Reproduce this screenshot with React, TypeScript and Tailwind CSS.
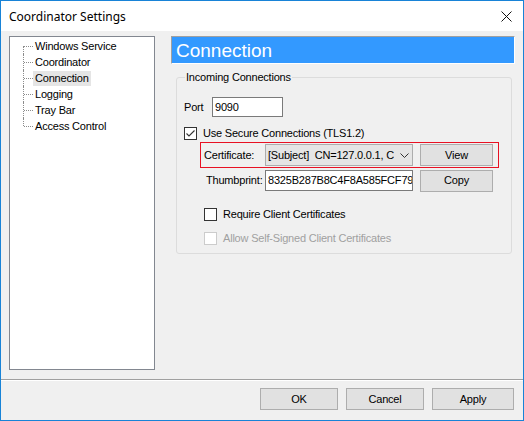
import { ReactNode } from "react";

const font = { fontFamily: '"Liberation Sans", Arial, sans-serif' };

function CheckBox({ checked = false, disabled = false }: { checked?: boolean; disabled?: boolean }) {
    return (
        <span
            className={`flex h-[13px] w-[13px] shrink-0 items-center justify-center border bg-white ${
                disabled ? "border-[#cccccc]" : "border-[#333333]"
            }`}
        >
            {checked && (
                <svg width="11" height="11" viewBox="0 0 11 11">
                    <path d="M1.5 5.5 L4 8 L9.5 2.5" fill="none" stroke="#333" strokeWidth="1.1" />
                </svg>
            )}
        </span>
    );
}

function Button({ children, className = "" }: { children: ReactNode; className?: string }) {
    return (
        <div
            className={`flex h-[22px] shrink-0 items-center justify-center border border-[#adadad] bg-[#e1e1e1] text-[11px] text-black ${className}`}
        >
            {children}
        </div>
    );
}

const treeItems = ["Windows Service", "Coordinator", "Connection", "Logging", "Tray Bar", "Access Control"];

export default function App() {
    return (
        <div
            className="flex h-[421px] w-[524px] flex-col border border-[#1883d7] bg-[#f0f0f0] text-[11px] leading-[13px] tracking-[-0.2px] text-black"
            style={font}
        >
            {/* Title bar */}
            <div className="flex h-[30px] shrink-0 items-center justify-between bg-white pl-[8px] pr-[10px] tracking-normal">
                <span className="text-[12px]" style={{ fontFamily: '"Noto Sans", "Open Sans", sans-serif' }}>
                    Coordinator Settings
                </span>
                <svg width="11" height="11" viewBox="0 0 11 11" className="mr-[1px]">
                    <path d="M0.5 0.5 L10.5 10.5 M10.5 0.5 L0.5 10.5" stroke="#111" strokeWidth="1" />
                </svg>
            </div>

            {/* Main area */}
            <div className="flex h-[348px] shrink-0 gap-[16px] pl-[8px] pr-[8px] pt-[5px]">
                {/* Tree */}
                <div className="h-[334px] w-[146px] shrink-0 border border-[#828790] bg-white pl-[13px] pt-[1px]">
                    {treeItems.map((item, i) => (
                        <div key={item} className="flex h-[16px] items-center">
                            <div className="relative h-full w-[10px] shrink-0">
                                <span
                                    className={`absolute left-0 border-l border-dotted border-[#8c8c8c] ${
                                        i === 0 ? "top-[8px] bottom-0" : i === treeItems.length - 1 ? "top-0 h-[8px]" : "top-0 bottom-0"
                                    }`}
                                />
                                <span className="absolute left-[1px] right-0 top-[8px] border-t border-dotted border-[#8c8c8c]" />
                            </div>
                            <span
                                className={`flex h-[15px] items-center px-[2px] leading-none ${
                                    item === "Connection" ? "bg-[#e5e5e5]" : ""
                                }`}
                            >
                                {item}
                            </span>
                        </div>
                    ))}
                </div>

                {/* Panel */}
                <div className="flex flex-1 flex-col">
                    <div className="flex h-[28px] items-center border-b border-l border-r border-t border-b-white border-l-[#a0a0a0] border-r-white border-t-[#a0a0a0] bg-[#3399ff] pl-[4px] text-[19px] tracking-normal text-white">
                        Connection
                    </div>

                    <fieldset className="ml-[5px] mr-[3px] mt-[7px] h-[183px] rounded-[3px] border border-[#dcdcdc] px-[7px]">
                        <legend className="ml-[1px] px-[1px] leading-[13px]">Incoming Connections</legend>

                        <div className="mt-[13px] flex items-center">
                            <span className="w-[28px]">Port</span>
                            <div className="flex h-[20px] w-[71px] items-center border border-[#7a7a7a] bg-white pl-[2px]">
                                9090
                            </div>
                        </div>

                        <div className="mt-[10px] flex items-center gap-[6px]">
                            <CheckBox checked />
                            <span>Use Secure Connections (TLS1.2)</span>
                        </div>

                        <div className="ml-[16px] mt-[2px] flex h-[26px] w-[299px] items-center border border-[#e81123] pl-[3px]">
                            <span className="w-[61px] shrink-0">Certificate:</span>
                            <div className="flex h-[22px] w-[148px] shrink-0 items-center border border-[#adadad] bg-[#e5e5e5] pl-[2px]">
                                <span className="w-[126px] overflow-hidden whitespace-nowrap">[Subject]&nbsp; CN=127.0.0.1, C</span>
                                <svg width="9" height="5" viewBox="0 0 9 5" className="ml-[6px]">
                                    <path d="M0.5 0.5 L4.5 4.5 L8.5 0.5" fill="none" stroke="#333" strokeWidth="1" />
                                </svg>
                            </div>
                            <Button className="ml-[7px] w-[73px]">View</Button>
                        </div>

                        <div className="ml-[22px] mt-[2px] flex h-[21px] items-center">
                            <span className="w-[59px] shrink-0 whitespace-nowrap">Thumbprint:</span>
                            <div className="flex h-[21px] w-[148px] shrink-0 items-center overflow-hidden whitespace-nowrap border border-[#7a7a7a] bg-white pl-[2px]">
                                8325B287B8C4F8A585FCF79C
                            </div>
                            <Button className="ml-[7px] w-[73px]">Copy</Button>
                        </div>

                        <div className="ml-[20px] mt-[17px] flex items-center gap-[6px]">
                            <CheckBox />
                            <span>Require Client Certificates</span>
                        </div>

                        <div className="ml-[20px] mt-[11px] flex items-center gap-[6px] text-[#a0a0a0]">
                            <CheckBox disabled />
                            <span>Allow Self-Signed Client Certificates</span>
                        </div>
                    </fieldset>
                </div>
            </div>

            {/* Separator */}
            <div className="h-[2px] shrink-0 border-t border-[#a0a0a0] bg-white" />

            {/* Buttons */}
            <div className="flex flex-1 justify-end gap-[8px] pr-[9px] pt-[7px]">
                <Button className="w-[78px]">OK</Button>
                <Button className="w-[78px]">Cancel</Button>
                <Button className="w-[82px]">Apply</Button>
            </div>
        </div>
    );
}
